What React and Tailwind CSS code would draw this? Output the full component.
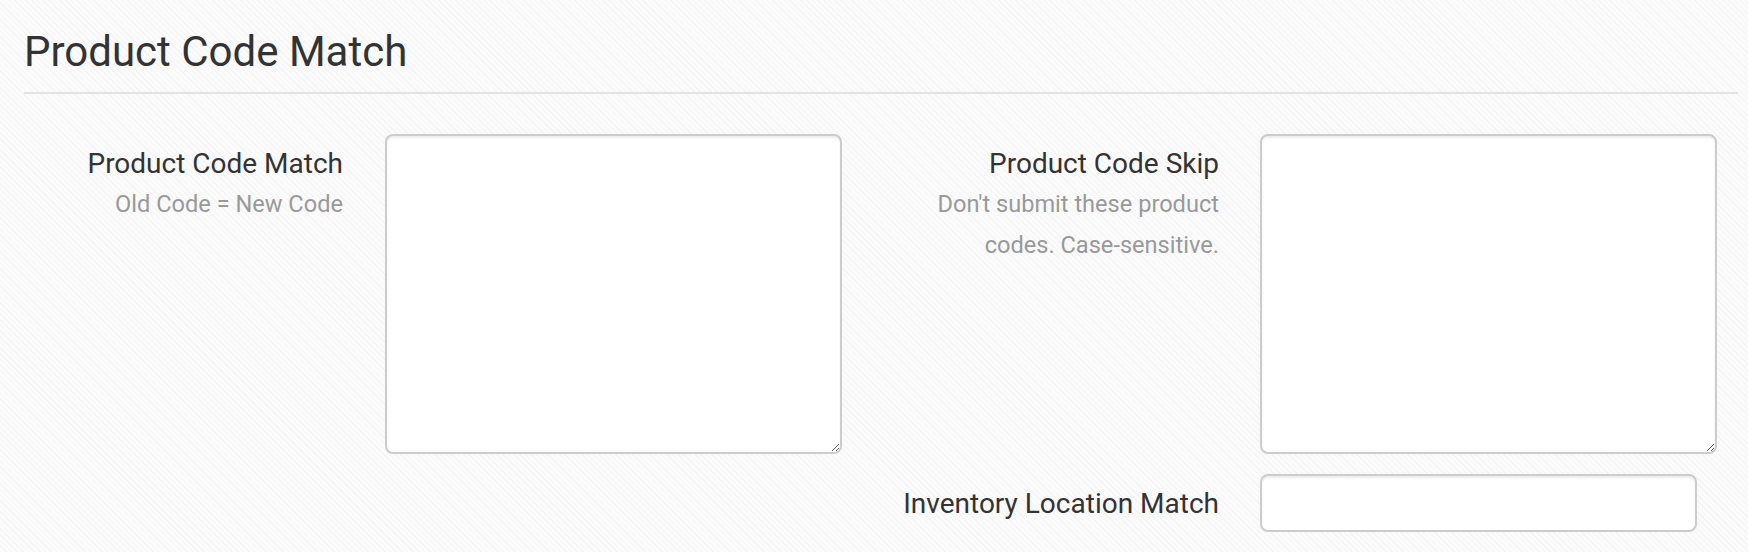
import { useState } from "react";

function FieldLabel({ title, help, width }) {
    return (
        <div className={`${width} shrink-0 pt-[8px] text-right`}>
            <div className="text-[28px] leading-[1.6] text-[#333333]">{title}</div>
            {help && (
                <div className="-mt-[3px] text-[23.6px] leading-[41px] text-[#999999]">{help}</div>
            )}
        </div>
    );
}

function App() {
    const [match, setMatch] = useState("");
    const [skip, setSkip] = useState("");
    const [location, setLocation] = useState("");

    const boxClass =
        "bg-white border-2 border-[#cccccc] rounded-[8px] shadow-[inset_0_2px_2px_rgba(0,0,0,0.075)] outline-none px-3 py-2 text-[26px] text-[#555555]";

    return (
        <div className="min-h-[552px] w-full bg-[#f9f9f9] bg-[image:repeating-linear-gradient(45deg,#f4f4f4_0px,#f4f4f4_1px,#fbfbfb_1px,#fbfbfb_4px)] font-['Roboto','Liberation_Sans',sans-serif]">
            <div className="ml-6 mr-[10px] pt-[29px] pb-[17px] border-b-2 border-[#e3e3e3]">
                <h1 className="text-[42px] leading-[1.1] text-[#333333] font-normal">
                    Product Code Match
                </h1>
            </div>

            <div className="flex mt-[40px]">
                <div className="w-[874px] flex">
                    <FieldLabel
                        width="w-[343px]"
                        title="Product Code Match"
                        help="Old Code = New Code"
                    />
                    <textarea
                        value={match}
                        onChange={(e) => setMatch(e.target.value)}
                        className={`${boxClass} ml-[42px] w-[457px] h-[320px]`}
                    />
                </div>

                <div className="w-[874px] flex flex-col gap-[20px]">
                    <div className="flex">
                        <FieldLabel
                            width="w-[345px]"
                            title="Product Code Skip"
                            help="Don't submit these product codes. Case-sensitive."
                        />
                        <textarea
                            value={skip}
                            onChange={(e) => setSkip(e.target.value)}
                            className={`${boxClass} ml-[41px] w-[457px] h-[320px]`}
                        />
                    </div>
                    <div className="flex">
                        <FieldLabel width="w-[345px]" title="Inventory Location Match" />
                        <input
                            type="text"
                            value={location}
                            onChange={(e) => setLocation(e.target.value)}
                            className={`${boxClass} ml-[41px] w-[437px] h-[58px]`}
                        />
                    </div>
                </div>
            </div>
        </div>
    );
}

export default App;
